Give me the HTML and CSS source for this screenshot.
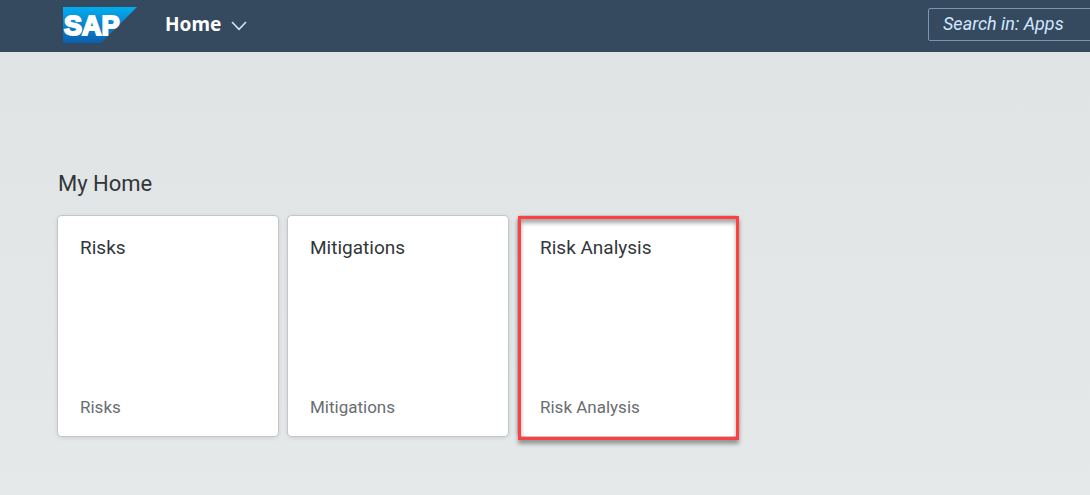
FILE: index.html
```html
<!DOCTYPE html>
<html lang="en">
<head>
<meta charset="utf-8">
<title>Home</title>
<link rel="stylesheet" href="styles.css">
</head>
<body>
<header class="shell">
  <a class="logo" href="#" aria-label="SAP">
    <svg class="logo-mark" viewBox="0 0 74 36" aria-hidden="true">
      <defs>
        <linearGradient id="logo-fill" x1="0" y1="0" x2="0" y2="1">
          <stop offset="0" stop-color="#00aeef"/>
          <stop offset="0.5" stop-color="#0c82cc"/>
          <stop offset="1" stop-color="#0a60ae"/>
        </linearGradient>
      </defs>
      <path d="M0 0H74L38 36H0Z" fill="url(#logo-fill)"/>
      <text class="logo-text" x="1" y="28">SAP</text>
    </svg>
  </a>
  <button class="nav-title" type="button">
    <span>Home</span>
    <svg class="chevron" viewBox="0 0 16 10" aria-hidden="true"><path d="M1 1L8 8.300L15 1"/></svg>
  </button>
  <input class="search" type="text" placeholder="Search in: Apps" aria-label="Search in: Apps">
</header>
<main class="content">
  <h1 class="group-title">My Home</h1>
  <div class="tiles">
    <a class="tile" href="#"><span class="tile-title">Risks</span><span class="tile-info">Risks</span></a>
    <a class="tile" href="#"><span class="tile-title">Mitigations</span><span class="tile-info">Mitigations</span></a>
    <a class="tile tile-marked" href="#"><span class="tile-title">Risk Analysis</span><span class="tile-info">Risk Analysis</span></a>
  </div>
</main>
</body>
</html>
```
FILE: styles.css
```css
* {
  box-sizing: border-box;
}

body {
  margin: 0;
  min-height: 100vh;
  font-family: Roboto, "Liberation Sans", sans-serif;
  color: #32363a;
  background: linear-gradient(#dfe3e4, #e5e9ea);
}

.shell {
  display: flex;
  align-items: center;
  height: 52px;
  padding-left: 63px;
  overflow: hidden;
  background: #354a5f;
}

.logo {
  display: block;
  margin-bottom: 2px;
}

.logo-mark {
  display: block;
  width: 74px;
  height: 36px;
}

.logo-text {
  font: bold 27px "Liberation Sans", sans-serif;
  fill: #fff;
  stroke: #fff;
  stroke-width: 2px;
}

.nav-title {
  display: flex;
  align-items: center;
  gap: 10px;
  margin: 0 0 4px 28px;
  padding: 0;
  border: 0;
  background: none;
  color: #fff;
  font: bold 19px/28px "Noto Sans", sans-serif;
}

.chevron {
  width: 16px;
  height: 10px;
  margin-top: 4px;
  fill: none;
  stroke: #d1e8ff;
  stroke-width: 1.5;
}

.search {
  width: 170px;
  height: 33px;
  margin: 0 -8px 3px auto;
  padding: 0 14px 2px;
  border: 1px solid #7996b4;
  border-radius: 2px;
  background: transparent;
  font: italic 18px Roboto, "Liberation Sans", sans-serif;
}

.search::placeholder {
  color: #d1e8ff;
  opacity: 1;
}

.content {
  padding: 116px 58px 40px;
}

.group-title {
  margin: 0 0 16px;
  font-size: 22px;
  line-height: 32px;
  font-weight: 400;
}

.tiles {
  display: flex;
  flex-wrap: wrap;
  gap: 10px;
}

.tile {
  position: relative;
  display: flex;
  flex-direction: column;
  justify-content: space-between;
  width: 220px;
  min-height: 220px;
  padding: 20px 22px 17px;
  border-radius: 4px;
  background: #fff;
  box-shadow: 0 0 0 1px #c3c7c9, 0 1px 5px rgba(0, 0, 0, 0.16);
  color: inherit;
  text-decoration: none;
}

.tile-title {
  font-size: 19px;
  line-height: 24px;
}

.tile-info {
  color: #6a6d70;
  font-size: 17px;
  line-height: 24px;
}

.tile-marked::after {
  content: "";
  position: absolute;
  inset: 0 -1px -4px 0;
  border: 3px solid #ff4040;
  box-shadow: 0 4px 4px rgba(0, 0, 0, 0.35), inset 0 4px 4px rgba(0, 0, 0, 0.35);
}
```
